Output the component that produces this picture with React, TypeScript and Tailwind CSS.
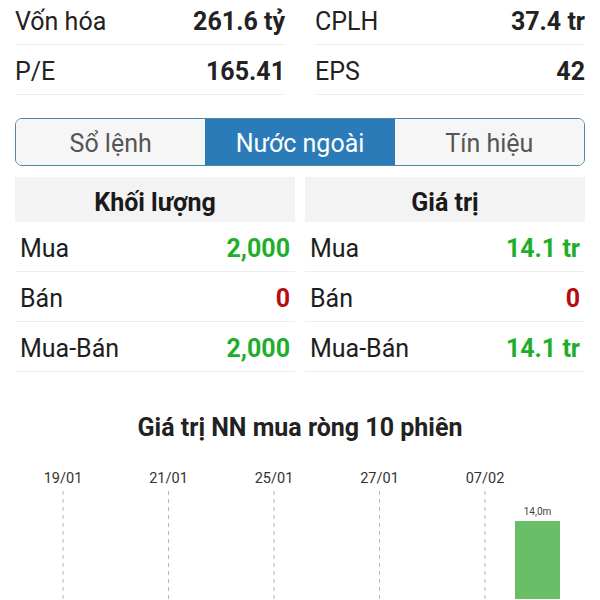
import React from "react";

const stats = [
  ["Vốn hóa", "261.6 tỷ"],
  ["CPLH", "37.4 tr"],
  ["P/E", "165.41"],
  ["EPS", "42"],
];

type Row = { label: string; value: string; color: string };

const left: Row[] = [
  { label: "Mua", value: "2,000", color: "text-[#1fae2a]" },
  { label: "Bán", value: "0", color: "text-[#b80d0d]" },
  { label: "Mua-Bán", value: "2,000", color: "text-[#1fae2a]" },
];
const right: Row[] = [
  { label: "Mua", value: "14.1 tr", color: "text-[#1fae2a]" },
  { label: "Bán", value: "0", color: "text-[#b80d0d]" },
  { label: "Mua-Bán", value: "14.1 tr", color: "text-[#1fae2a]" },
];

function Table({ title, rows }: { title: string; rows: Row[] }) {
  return (
    <div className="flex flex-col">
      <div className="h-[45px] pt-[5px] bg-[#f3f3f3] flex items-center justify-center text-[25px] leading-none font-bold text-[#1a1a1a]">
        {title}
      </div>
      {rows.map((r) => (
        <div
          key={r.label}
          className="h-[50px] pt-[4px] border-b border-[#eeeeee] flex items-center justify-between px-[5px] text-[25px] leading-none"
        >
          <span className="text-[#1e1e1e]">{r.label}</span>
          <span className={`font-bold ${r.color}`}>{r.value}</span>
        </div>
      ))}
    </div>
  );
}

export default function App() {
  const dates = [
    { x: 63, t: "19/01" },
    { x: 168.5, t: "21/01" },
    { x: 274, t: "25/01" },
    { x: 379.5, t: "27/01" },
    { x: 485, t: "07/02" },
  ];
  return (
    <div className="w-[600px] h-[600px] overflow-hidden bg-white font-['Roboto',sans-serif] text-[#222]">
      <div className="px-[15px] grid grid-cols-2 gap-x-[30px] -mt-[5px]">
        {stats.map(([l, v]) => (
          <div
            key={l}
            className="h-[50px] pt-[4px] border-b border-[#eeeeee] flex items-center justify-between text-[25px] leading-none"
          >
            <span className="text-[#222]">{l}</span>
            <span className="font-bold text-[#222]">{v}</span>
          </div>
        ))}
      </div>

      <div className="mx-[15px] mt-[23px] h-[48px] flex border-[1.5px] border-[#4b88a3] rounded-[7px] overflow-hidden text-[25px] leading-none">
        <div className="flex-1 pt-[2px] bg-[#f7f6f6] flex items-center justify-center text-[#555]">Sổ lệnh</div>
        <div className="flex-1 pt-[2px] bg-[#2b7bb8] flex items-center justify-center text-white">Nước ngoài</div>
        <div className="flex-1 pt-[2px] bg-[#f7f6f6] flex items-center justify-center text-[#555]">Tín hiệu</div>
      </div>

      <div className="mx-[15px] mt-[11px] grid grid-cols-2 gap-x-[10px]">
        <Table title="Khối lượng" rows={left} />
        <Table title="Giá trị" rows={right} />
      </div>

      <div className="mt-[41px] h-[28px] flex items-center justify-center text-[25px] leading-none font-bold text-[#222]">
        Giá trị NN mua ròng 10 phiên
      </div>

      <svg width="600" height="150" viewBox="0 0 600 150" className="block mt-[8px]">
        {dates.map((d) => (
          <g key={d.t}>
            <text
              x={d.x}
              y={34}
              textAnchor="middle"
              fontFamily="Roboto, sans-serif"
              fontSize="14.5"
              fill="#333"
            >
              {d.t}
            </text>
            <line
              x1={d.x}
              y1={42}
              x2={d.x}
              y2={150}
              stroke="#b5b5b5"
              strokeWidth="1"
              strokeDasharray="4 4"
            />
          </g>
        ))}
        <rect x="515" y="72" width="45" height="80" fill="#6abe68" />
        <text
          x="537.5"
          y="66"
          textAnchor="middle"
          fontFamily="Roboto, sans-serif"
          fontSize="10"
          fill="#444"
        >
          14,0m
        </text>
      </svg>
    </div>
  );
}
